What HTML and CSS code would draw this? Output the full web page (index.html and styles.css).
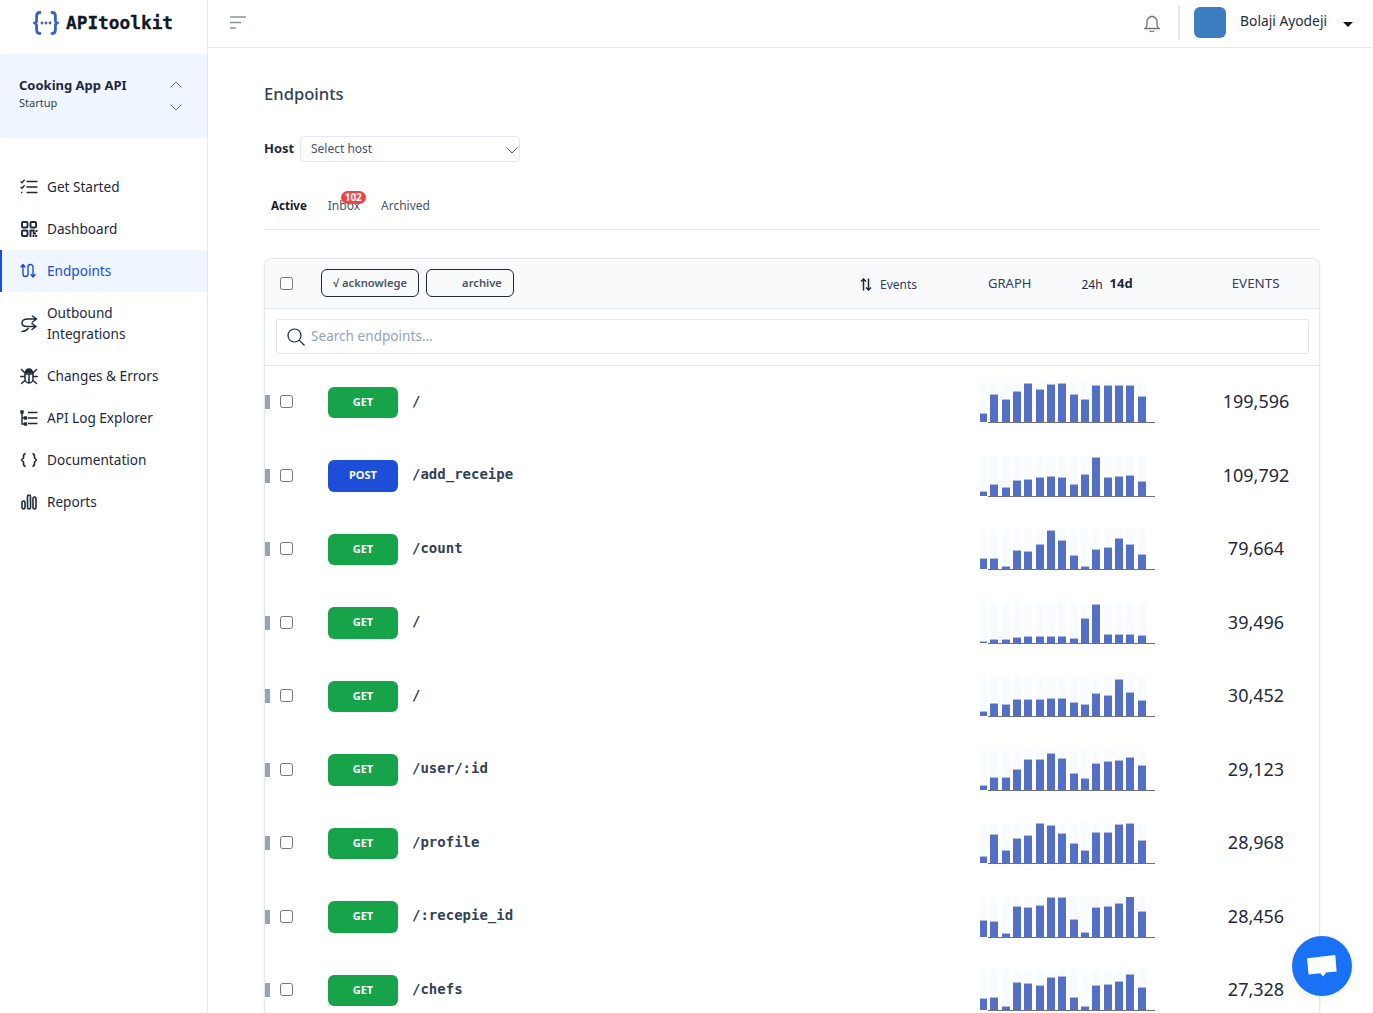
FILE: index.html
```html
<!DOCTYPE html>
<html lang="en">
<head>
<meta charset="utf-8">
<title>Endpoints</title>
<link rel="stylesheet" href="styles.css">
</head>
<body>
<div class="app">
  <aside class="sidebar">
    <div class="logo">
      <svg class="logo-mark" viewBox="0 0 26 24" fill="none" stroke="#3b63c4" stroke-width="2.800" stroke-linecap="round" stroke-linejoin="round"><path d="M7 1.500C4.200 1.500 3.600 3 3.600 5v4.500c0 1.400-.7 2.200-2.200 2.500 1.500.3 2.200 1.100 2.200 2.500V19c0 2 .6 3.500 3.400 3.500"/><path d="M19 1.500c2.800 0 3.400 1.500 3.400 3.500v4.500c0 1.400.7 2.200 2.200 2.500-1.500.3-2.200 1.100-2.200 2.500V19c0 2-.6 3.500-3.400 3.500"/><path d="M9 12h.01M13 12h.01M17 12h.01" stroke-width="2.800"/></svg>
      <span class="logo-text">APItoolkit</span>
    </div>
    <div class="project">
      <div class="project-text">
        <strong>Cooking App API</strong>
        <span>Startup</span>
      </div>
      <div class="project-arrows">
        <svg viewBox="0 0 12 7" fill="none" stroke="#55679f" stroke-width="1"><path d="M.5 6.500 6 1l5.500 5.500"/></svg>
        <svg viewBox="0 0 12 7" fill="none" stroke="#55679f" stroke-width="1"><path d="M.5.500 6 6l5.500-5.500"/></svg>
      </div>
    </div>
    <nav class="nav">
      <a class="nav-item"><svg viewBox="0 0 18 16" fill="none" stroke="#1e293b" stroke-width="1.400"><path d="M.6 2.500 2 3.800 4.600.8M.6 8 2 9.300 4.600 6.300M1 13.500h1.400M6.500 2.500h11M6.500 8h11M6.500 13.500h11"/></svg>Get Started</a>
      <a class="nav-item"><svg viewBox="0 0 16 16" fill="none" stroke="#1e293b" stroke-width="1.900"><rect x="1" y="1" width="5.500" height="5.500" rx="1"/><rect x="9.500" y="1" width="5.500" height="5.500" rx="1"/><rect x="1" y="9.500" width="5.500" height="5.500" rx="1"/><path d="M9.500 16V9.500h3.200v3H15M15.500 9v2M12.500 14v2M15.200 14v2"/></svg>Dashboard</a>
      <a class="nav-item active"><svg viewBox="0 0 18 16" fill="none" stroke="#1d4ed8" stroke-width="1.400" stroke-linecap="round" stroke-linejoin="round"><path d="M1 4 3 1.500 5 4M3 2v9a2.500 2.500 0 0 0 5 0V4a2.500 2.500 0 0 1 5 0v9M11 11.500l2 2.500 2-2.500"/></svg>Endpoints</a>
      <a class="nav-item tall"><svg class="icon-tall" viewBox="0 0 18 18" fill="none" stroke="#1e293b" stroke-width="1.500" stroke-linecap="round" stroke-linejoin="round"><path d="M12.500 1l4 3-4 3M16 4H8C4 4 2 5.500 2 8s2 3.500 5 3.500h8.500M12 8.500l4 3-4 3M2 16.500c2.500 0 4.500-1 6-3"/></svg><span>Outbound<br>Integrations</span></a>
      <a class="nav-item"><svg class="icon-tall" viewBox="0 0 18 18" fill="none" stroke="#1e293b" stroke-width="1.500" stroke-linecap="round"><path d="M5.500 5.500a3.500 3.500 0 0 1 7 0z" fill="#1e293b"/><path d="M5 7h8v5a4 4 0 0 1-8 0zM9 8v8M1.500 2.500 5 6M16.500 2.500 13 6M.8 9.500H5M17.200 9.500H13M1.500 16.500 5 13.500M16.500 16.500 13 13.500"/></svg>Changes &amp; Errors</a>
      <a class="nav-item"><svg viewBox="0 0 18 16" fill="none" stroke="#1e293b" stroke-width="1.400"><path d="M2 2v12h3M2 8h3M8 2.500h9.500M8 8h9.500M8 13.500h9.500"/><rect x="1" y="1" width="2" height="2" fill="#1e293b"/><rect x="4.500" y="7" width="2" height="2" fill="#1e293b"/><rect x="4.500" y="13" width="2" height="2" fill="#1e293b"/></svg>API Log Explorer</a>
      <a class="nav-item"><svg viewBox="0 0 18 16" fill="none" stroke="#1e293b" stroke-width="1.600" stroke-linejoin="round"><path d="M5.500 1.500C3.500 2 3.500 3 3.500 4.500V6L1.500 8l2 2v1.500c0 1.500 0 2.500 2 3M12.500 1.500c2 .5 2 1.500 2 3V6l2 2-2 2v1.500c0 1.500 0 2.500-2 3"/></svg>Documentation</a>
      <a class="nav-item"><svg viewBox="0 0 18 16" fill="none" stroke="#1e293b" stroke-width="1.600"><rect x="2" y="7" width="3" height="8" rx="1.500"/><rect x="7.500" y="1" width="3" height="14" rx="1.500"/><rect x="13" y="3" width="3" height="12" rx="1.500"/></svg>Reports</a>
    </nav>
  </aside>

  <div class="content">
    <header class="topbar">
      <svg class="menu-icon" viewBox="0 0 16 13" fill="none" stroke="#8b95a3" stroke-width="1.500"><path d="M0 1h16M0 6.500h11M0 12h6"/></svg>
      <div class="top-right">
        <svg class="bell" viewBox="0 0 16 18" fill="none" stroke="#6b7280" stroke-width="1.300"><path d="M8 1.500a5 5 0 0 0-5 5v3.500c0 1.500-1 2.500-2 3.500h14c-1-1-2-2-2-3.500V6.500a5 5 0 0 0-5-5zM5.500 15.500c1 1.500 4 1.500 5 0"/><path d="M8 .5v1"/></svg>
        <span class="top-divider"></span>
        <span class="avatar"></span>
        <span class="user-name">Bolaji Ayodeji</span>
        <span class="caret"></span>
      </div>
    </header>

    <main class="main">
      <h1 class="title">Endpoints</h1>
      <div class="host-row">
        <label class="host-label">Host</label>
        <div class="host-select">
          <span>Select host</span>
          <svg viewBox="0 0 12 7" fill="none" stroke="#475569" stroke-width="1"><path d="M.5.500 6 6l5.500-5.500"/></svg>
        </div>
      </div>
      <div class="tabs">
        <a class="tab tab-active">Active</a>
        <a class="tab tab-inbox">Inbox<span class="badge">102</span></a>
        <a class="tab">Archived</a>
      </div>

      <section class="card">
        <div class="card-head">
          <input type="checkbox" class="check">
          <button class="act act-ack">√ acknowlege</button>
          <button class="act act-arch">archive</button>
          <svg class="sort-icon" viewBox="0 0 12 13" fill="none" stroke="#1e293b" stroke-width="1.500"><path d="M3.500 12.500V1.500M1 3.500l2.500-2.500L6 3.500M8.500.5v11M6 9.500l2.500 2.500 2.500-2.500"/></svg>
          <span class="sort-label">Events</span>
          <span class="head-graph">GRAPH</span>
          <span class="head-range">24h</span>
          <strong class="head-range-on">14d</strong>
          <span class="head-events">EVENTS</span>
        </div>
        <div class="search-wrap">
          <div class="search">
            <svg viewBox="0 0 18 18" fill="none" stroke="#1f2937" stroke-width="1.200"><circle cx="7.500" cy="7.500" r="6.500"/><path d="m12.200 12.200 5.300 5.300"/></svg>
            <span>Search endpoints...</span>
          </div>
        </div>

        <div class="row"><i class="mark"></i><input type="checkbox" class="check"><span class="method get">GET</span><span class="path">/</span>
          <div class="chart"><div class="bars"><i style="--h:7.700px"></i><i style="--h:27px"></i><i style="--h:22px"></i><i style="--h:30.300px"></i><i style="--h:38px"></i><i style="--h:32.300px"></i><i style="--h:37.300px"></i><i style="--h:38px"></i><i style="--h:27.300px"></i><i style="--h:22px"></i><i style="--h:35.700px"></i><i style="--h:35.700px"></i><i style="--h:36px"></i><i style="--h:36px"></i><i style="--h:25.300px"></i></div><div class="axis"></div></div>
          <span class="count">199,596</span></div>

        <div class="row"><i class="mark"></i><input type="checkbox" class="check"><span class="method post">POST</span><span class="path">/add_receipe</span>
          <div class="chart"><div class="bars"><i style="--h:3.700px"></i><i style="--h:11.300px"></i><i style="--h:7.700px"></i><i style="--h:14.700px"></i><i style="--h:16px"></i><i style="--h:17.700px"></i><i style="--h:19px"></i><i style="--h:18px"></i><i style="--h:10.700px"></i><i style="--h:21.300px"></i><i style="--h:38.300px"></i><i style="--h:18px"></i><i style="--h:19px"></i><i style="--h:20.300px"></i><i style="--h:13.700px"></i></div><div class="axis"></div></div>
          <span class="count">109,792</span></div>

        <div class="row"><i class="mark"></i><input type="checkbox" class="check"><span class="method get">GET</span><span class="path">/count</span>
          <div class="chart"><div class="bars"><i style="--h:10px"></i><i style="--h:10px"></i><i style="--h:1.700px"></i><i style="--h:17.700px"></i><i style="--h:17px"></i><i style="--h:24px"></i><i style="--h:37.700px"></i><i style="--h:28px"></i><i style="--h:12.700px"></i><i style="--h:2px"></i><i style="--h:19.300px"></i><i style="--h:21px"></i><i style="--h:30px"></i><i style="--h:24.300px"></i><i style="--h:14px"></i></div><div class="axis"></div></div>
          <span class="count">79,664</span></div>

        <div class="row"><i class="mark"></i><input type="checkbox" class="check"><span class="method get">GET</span><span class="path">/</span>
          <div class="chart"><div class="bars"><i style="--h:1.300px"></i><i style="--h:3.300px"></i><i style="--h:3.300px"></i><i style="--h:5px"></i><i style="--h:6px"></i><i style="--h:6px"></i><i style="--h:6.300px"></i><i style="--h:6.300px"></i><i style="--h:4.300px"></i><i style="--h:24px"></i><i style="--h:38.300px"></i><i style="--h:8px"></i><i style="--h:8.300px"></i><i style="--h:8px"></i><i style="--h:6.700px"></i></div><div class="axis"></div></div>
          <span class="count">39,496</span></div>

        <div class="row"><i class="mark"></i><input type="checkbox" class="check"><span class="method get">GET</span><span class="path">/</span>
          <div class="chart"><div class="bars"><i style="--h:3.700px"></i><i style="--h:12.300px"></i><i style="--h:10.700px"></i><i style="--h:16px"></i><i style="--h:16.300px"></i><i style="--h:15.700px"></i><i style="--h:17.300px"></i><i style="--h:17.300px"></i><i style="--h:13.300px"></i><i style="--h:10.700px"></i><i style="--h:22px"></i><i style="--h:20.300px"></i><i style="--h:36px"></i><i style="--h:23.300px"></i><i style="--h:15px"></i></div><div class="axis"></div></div>
          <span class="count">30,452</span></div>

        <div class="row"><i class="mark"></i><input type="checkbox" class="check"><span class="method get">GET</span><span class="path">/user/:id</span>
          <div class="chart"><div class="bars"><i style="--h:4.300px"></i><i style="--h:12px"></i><i style="--h:12px"></i><i style="--h:20px"></i><i style="--h:30.300px"></i><i style="--h:29.700px"></i><i style="--h:36px"></i><i style="--h:31px"></i><i style="--h:15.700px"></i><i style="--h:11px"></i><i style="--h:26px"></i><i style="--h:28.300px"></i><i style="--h:29px"></i><i style="--h:32px"></i><i style="--h:24.300px"></i></div><div class="axis"></div></div>
          <span class="count">29,123</span></div>

        <div class="row"><i class="mark"></i><input type="checkbox" class="check"><span class="method get">GET</span><span class="path">/profile</span>
          <div class="chart"><div class="bars"><i style="--h:5.700px"></i><i style="--h:28px"></i><i style="--h:11.700px"></i><i style="--h:24.300px"></i><i style="--h:27px"></i><i style="--h:39.300px"></i><i style="--h:37.300px"></i><i style="--h:29.300px"></i><i style="--h:18.700px"></i><i style="--h:12px"></i><i style="--h:30px"></i><i style="--h:30px"></i><i style="--h:38px"></i><i style="--h:39.300px"></i><i style="--h:22.300px"></i></div><div class="axis"></div></div>
          <span class="count">28,968</span></div>

        <div class="row"><i class="mark"></i><input type="checkbox" class="check"><span class="method get">GET</span><span class="path">/:recepie_id</span>
          <div class="chart"><div class="bars"><i style="--h:16.300px"></i><i style="--h:15px"></i><i style="--h:3.300px"></i><i style="--h:30.300px"></i><i style="--h:29.300px"></i><i style="--h:31px"></i><i style="--h:39.300px"></i><i style="--h:39.300px"></i><i style="--h:17.300px"></i><i style="--h:4.300px"></i><i style="--h:28.700px"></i><i style="--h:30.300px"></i><i style="--h:33px"></i><i style="--h:40px"></i><i style="--h:25.300px"></i></div><div class="axis"></div></div>
          <span class="count">28,456</span></div>

        <div class="row"><i class="mark"></i><input type="checkbox" class="check"><span class="method get">GET</span><span class="path">/chefs</span>
          <div class="chart"><div class="bars"><i style="--h:11.300px"></i><i style="--h:11.700px"></i><i style="--h:3px"></i><i style="--h:27px"></i><i style="--h:26.300px"></i><i style="--h:23.700px"></i><i style="--h:31.700px"></i><i style="--h:33px"></i><i style="--h:12.300px"></i><i style="--h:3.300px"></i><i style="--h:24px"></i><i style="--h:25px"></i><i style="--h:27.700px"></i><i style="--h:35px"></i><i style="--h:22px"></i></div><div class="axis"></div></div>
          <span class="count">27,328</span></div>
      </section>
    </main>
  </div>
</div>
<div class="chat">
  <svg viewBox="0 0 30 24" fill="#fff"><path d="M0 3.200 28.300 0l1.300 16.500-10.600 1.100-2.700 4-3.100-3.400-11.600 1.300z"/></svg>
</div>
</body>
</html>
```

FILE: styles.css
```css
* { box-sizing: border-box; }
html, body { margin: 0; height: 100%; overflow: hidden; background: #fff; }
body { font-family: "Noto Sans", sans-serif; color: #1e293b; }

.app { display: flex; height: 100vh; }

/* sidebar */
.sidebar { width: 208px; flex: none; border-right: 1px solid #e5e7eb; }
.logo { height: 54px; padding: 11px 0 0 33px; display: flex; align-items: flex-start; gap: 7px; }
.logo-mark { width: 26px; height: 24px; flex: none; }
.logo-text { font-family: "DejaVu Sans Mono", monospace; font-weight: 700; font-size: 17.800px; line-height: 24px; color: #111827; -webkit-text-stroke: .3px #111827; }
.project { height: 84px; background: #eff6ff; border-radius: 4px; padding: 0 25px 0 19px; display: flex; justify-content: space-between; align-items: center; }
.project-text { display: flex; flex-direction: column; margin-top: -8px; }
.project-text strong { font-size: 13px; font-weight: 700; line-height: 20px; color: #1e293b; }
.project-text span { font-size: 11px; line-height: 15px; color: #334155; }
.project-arrows { display: flex; flex-direction: column; gap: 16px; margin-top: -1px; }
.project-arrows svg { width: 12px; height: 7px; display: block; }
.nav { margin-top: 28px; }
.nav-item { display: flex; align-items: center; gap: 9px; height: 42px; padding-left: 20px; padding-bottom: 2px; font-size: 13.600px; color: #1e293b; }
.nav-item svg { width: 18px; height: 16px; flex: none; margin-top: 2px; }
.nav-item svg.icon-tall { height: 18px; }
.nav-item.active { background: #eff6ff; color: #1d4ed8; border-left: 2px solid #1d4ed8; padding-left: 18px; }
.nav-item.tall { height: 63px; line-height: 21px; }

/* topbar */
.content { flex: 1; min-width: 0; display: flex; flex-direction: column; }
.topbar { height: 48px; flex: none; border-bottom: 1px solid #e5e7eb; display: flex; align-items: center; justify-content: space-between; padding: 0 20px 2px 22px; }
.menu-icon { width: 16px; height: 13px; }
.top-right { display: flex; align-items: center; }
.bell { width: 16px; height: 18px; margin-top: 3px; }
.top-divider { width: 2px; height: 34px; background: #e5e7eb; margin: 0 14px 0 18px; }
.avatar { width: 32px; height: 31px; border-radius: 6px; background: #3b7dbf; }
.user-name { font-size: 13.800px; line-height: 20px; color: #1e293b; margin-left: 14px; margin-top: -3px; }
.caret { width: 0; height: 0; border: 5px solid transparent; border-top: 5px solid #111827; border-bottom: 0; margin-left: 16px; margin-top: 3px; }

/* main */
.main { padding: 0 53px 0 56px; }
.title { margin: 36px 0 0; font-size: 16.600px; line-height: 20px; font-weight: 500; color: #334155; }
.host-row { display: flex; align-items: center; gap: 6px; margin-top: 32px; }
.host-label { font-size: 13px; font-weight: 700; line-height: 16px; color: #1e293b; margin-top: -2px; width: 30px; }
.host-select { width: 220px; height: 26px; border: 1px solid #e2e8f0; border-radius: 4px; padding: 0 1px 2px 10px; display: flex; align-items: center; justify-content: space-between; font-size: 12px; color: #475569; }
.host-select svg { width: 12px; height: 7px; margin-top: 4px; }
.tabs { display: flex; margin-top: 27px; height: 41px; border-bottom: 1px solid #e2e8f0; padding-left: 7px; gap: 21px; font-size: 12px; color: #475569; }
.tab { line-height: 34px; }
.tab-active { font-weight: 700; font-size: 11.500px; color: #111827; }
.tab-inbox { position: relative; }
.badge { position: absolute; left: 13px; top: 2px; width: 25px; height: 13px; border-radius: 7px; background: #ef4444; color: #fff; font-size: 10px; font-weight: 700; line-height: 13px; text-align: center; }

/* card */
.card { margin-top: 28px; border: 1px solid #e2e8f0; border-bottom: 0; border-radius: 8px 8px 0 0; box-shadow: 0 1px 3px rgba(15, 23, 42, .08); }
.card-head { height: 50px; background: #f8fafc; border-bottom: 1px solid #e2e8f0; border-radius: 8px 8px 0 0; display: flex; align-items: center; padding-left: 15px; font-size: 13px; color: #334155; }
.card-head .check { margin-top: -1px; }
.check { width: 13px; height: 13px; margin: 0; flex: none; }
.act { height: 28px; margin-top: -1px; padding: 0 0 2px; background: transparent; border: 1px solid #1f2937; border-radius: 6px; font: 600 11.200px "Noto Sans", sans-serif; color: #475569; }
.act-ack { width: 98px; margin-left: 28px; }
.act-arch { width: 88px; margin-left: 7px; padding-left: 24px; }
.sort-icon { width: 12px; height: 13px; margin-left: 346px; margin-top: 2px; }
.sort-label { font-size: 12px; margin-left: 8px; margin-top: 1px; }
.head-graph { margin-left: 71px; margin-top: -2px; }
.head-range { font-size: 12px; margin-left: 50px; margin-top: 1px; color: #1e293b; }
.head-range-on { margin-left: 7px; font-weight: 700; margin-top: -1px; color: #1e293b; }
.head-events { margin-left: 99px; font-size: 13.400px; margin-top: -2px; }

.search-wrap { height: 56.750px; padding: 10px 10px 0 11px; border-bottom: 1px solid #e2e8f0; }
.search { height: 35px; border: 1px solid #e2e8f0; border-radius: 2px; display: flex; align-items: center; padding-left: 10px; gap: 6px; font-size: 13.600px; color: #94a3b8; }
.search svg { width: 18px; height: 18px; flex: none; }
.search span { margin-top: -2px; }

.row { height: 73.500px; display: flex; align-items: center; }
.mark { width: 5px; height: 14px; background: #94a3b8; flex: none; margin-top: -.6px; }
.row .check { margin-left: 10px; margin-top: -1.600px; }
.method { width: 70px; height: 31.500px; margin-left: 35px; flex: none; border-radius: 6px; padding-bottom: 2.600px; display: flex; align-items: center; justify-content: center; color: #fff; font-size: 11px; font-weight: 700; }
.get { background: #16a34a; }
.post { background: #1d4ed8; }
.path { flex: 1; margin-left: 14px; font-family: "DejaVu Sans Mono", monospace; font-weight: 700; font-size: 14px; color: #334155; margin-top: -3.600px; }
.chart { width: 175px; flex: none; margin-top: .4px; overflow: hidden; }
.bars { display: flex; gap: 3.333px; height: 40px; margin-left: -1px; }
.bars i { width: 8px; flex: none; background: linear-gradient(to top, #5470c6 var(--h), #aebbe6 var(--h), #aebbe6 calc(var(--h) + 1px), #f8fbff calc(var(--h) + 1px)); }
.axis { height: 1px; margin-left: 8px; background: #6e7079; }
.count { width: 126px; margin-left: 38px; flex: none; text-align: center; font-size: 18px; color: #1e293b; margin-top: -2.500px; }

.chat { position: fixed; left: 1292px; top: 936px; width: 60px; height: 60px; border-radius: 50%; background: #1972f5; box-shadow: 0 2px 8px rgba(0, 0, 0, .08); display: flex; align-items: center; justify-content: center; }
.chat svg { width: 30px; height: 24px; margin-top: 2px; }
```
